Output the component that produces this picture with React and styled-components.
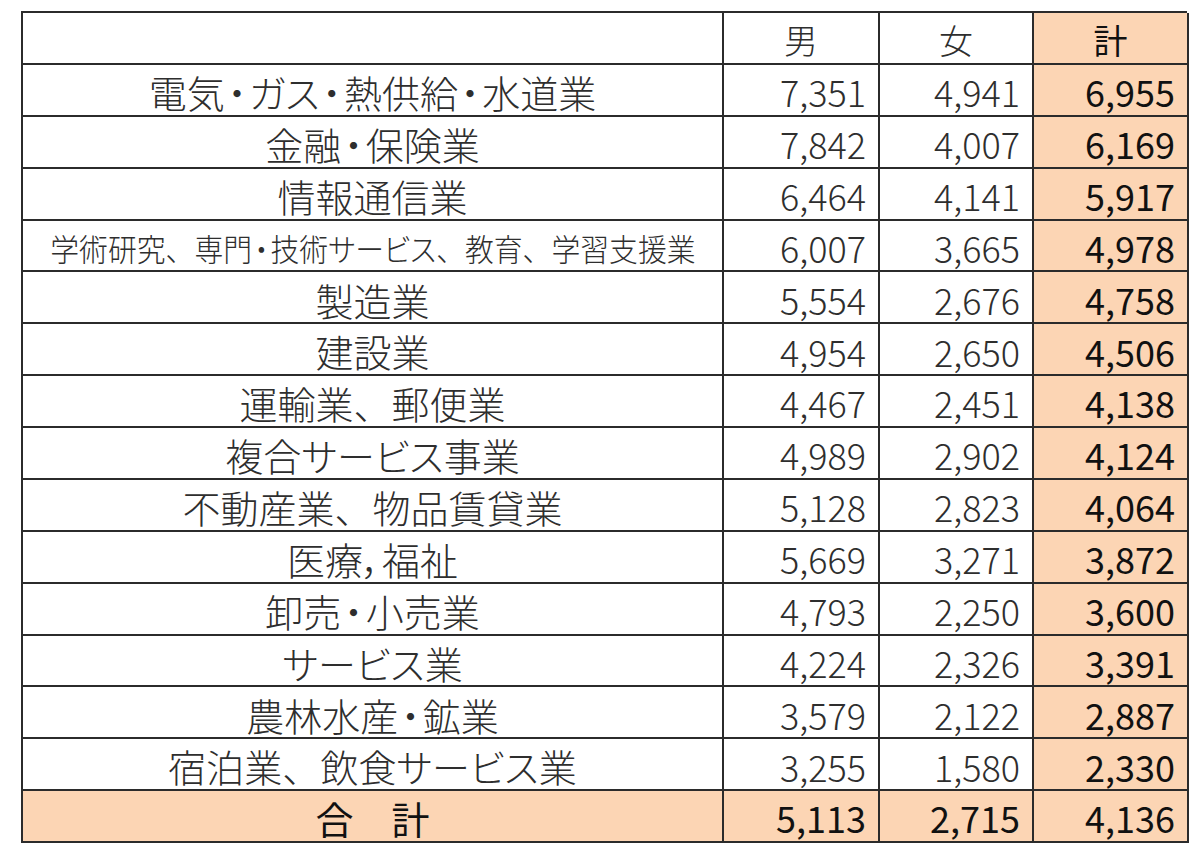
import React from "react";
import styled, { createGlobalStyle } from "styled-components";

const ROWS = [
  ["電気・ガス・熱供給・水道業", "7,351", "4,941", "6,955"],
  ["金融・保険業", "7,842", "4,007", "6,169"],
  ["情報通信業", "6,464", "4,141", "5,917"],
  ["学術研究、専門・技術サービス、教育、学習支援業", "6,007", "3,665", "4,978", true],
  ["製造業", "5,554", "2,676", "4,758"],
  ["建設業", "4,954", "2,650", "4,506"],
  ["運輸業、郵便業", "4,467", "2,451", "4,138"],
  ["複合サービス事業", "4,989", "2,902", "4,124"],
  ["不動産業、物品賃貸業", "5,128", "2,823", "4,064"],
  ["医療，福祉", "5,669", "3,271", "3,872"],
  ["卸売・小売業", "4,793", "2,250", "3,600"],
  ["サービス業", "4,224", "2,326", "3,391"],
  ["農林水産・鉱業", "3,579", "2,122", "2,887"],
  ["宿泊業、飲食サービス業", "3,255", "1,580", "2,330"],
];

const GlobalStyle = createGlobalStyle`
  body {
    margin: 0;
    background: #ffffff;
    font-family: "Noto Sans CJK JP", "Noto Sans", sans-serif;
  }
`;

const Page = styled.div`
  padding: 11px 0 0 21px;
`;

const Grid = styled.div`
  display: grid;
  grid-template-columns: 701px 156px 154px 155px;
  grid-auto-rows: 51.875px;
  width: 1166px;
  border-top: 2px solid #2b2b2b;
  border-left: 2px solid #2b2b2b;
  box-sizing: border-box;
`;

const Cell = styled.div`
  box-sizing: border-box;
  border-right: 2px solid #2b2b2b;
  border-bottom: 2px solid #2b2b2b;
  background: ${(p) => (p.$peach ? "#fcd5b4" : "#ffffff")};
  display: flex;
  align-items: center;
  justify-content: ${(p) => (p.$align === "right" ? "flex-end" : "center")};
  padding: 4px 12px 0 12px;
  font-size: ${(p) => p.$size || 36}px;
  font-weight: ${(p) => (p.$bold ? 400 : 300)};
  color: ${(p) => (p.$bold ? "#111" : "#2e2e2e")};
  white-space: nowrap;
  line-height: 1.2;
`;

const Label = styled.span`
  display: inline-block;
  font-feature-settings: "palt";
  transform: scaleX(${(p) => p.$squeeze || 1});
`;

// 、 stays full width, ・ is narrow with a little air, like the proportional gothic of the source
const Comma = styled.span`
  font-feature-settings: normal;
`;

const Dot = styled.span`
  padding: 0 0.07em;
`;

function LabelText({ text, squeeze }) {
  const parts = text.split(/([、・])/);
  return (
    <Label $squeeze={squeeze}>
      {parts.map((part, i) => {
        if (part === "、") return <Comma key={i}>{part}</Comma>;
        if (part === "・") return <Dot key={i}>{part}</Dot>;
        return part;
      })}
    </Label>
  );
}

export default function App() {
  return (
    <Page>
      <GlobalStyle />
      <Grid>
        <Cell />
        <Cell $size={34}>男</Cell>
        <Cell $size={34}>女</Cell>
        <Cell $size={34} $peach $bold>計</Cell>
        {ROWS.map(([label, m, f, t, small]) => (
          <React.Fragment key={label}>
            <Cell $size={small ? 31 : 38}>
              <LabelText text={label} squeeze={small ? 0.93 : 1} />
            </Cell>
            <Cell $align="right">{m}</Cell>
            <Cell $align="right">{f}</Cell>
            <Cell $align="right" $peach $bold>{t}</Cell>
          </React.Fragment>
        ))}
        <Cell $size={38} $peach $bold>合　計</Cell>
        <Cell $align="right" $peach $bold>5,113</Cell>
        <Cell $align="right" $peach $bold>2,715</Cell>
        <Cell $align="right" $peach $bold>4,136</Cell>
      </Grid>
    </Page>
  );
}
